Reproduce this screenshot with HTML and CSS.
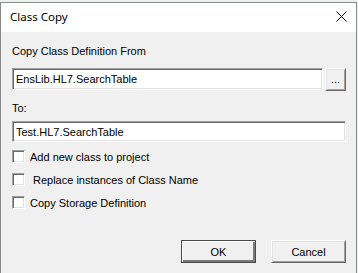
FILE: index.html
```html
<!DOCTYPE html>
<html lang="en">
<head>
  <meta charset="UTF-8" />
  <title>Class Copy</title>
  <link rel="stylesheet" href="styles.css">
</head>
<body>

  <div class="window">
    <div class="titlebar">
      <span class="title">Class Copy</span>
      <svg class="close" width="11" height="11" viewBox="0 0 11 11">
        <path d="M0.5 0.5 L10.5 10.5 M10.5 0.5 L0.5 10.5" stroke="#000" stroke-width="1" fill="none" />
      </svg>
    </div>

    <div class="content">
      <div class="label first">Copy Class Definition From</div>
      <div class="row">
        <div class="field from">EnsLib.HL7.SearchTable</div>
        <div class="btn browse">...</div>
      </div>

      <div class="label to">To:</div>
      <div class="field dest">Test.HL7.SearchTable</div>

      <div class="checks">
        <label class="check"><span class="box"></span><span class="text">Add new class to project</span></label>
        <label class="check"><span class="box"></span><span class="text wide">Replace instances of Class Name</span></label>
        <label class="check"><span class="box"></span><span class="text">Copy Storage Definition</span></label>
      </div>

      <div class="actions">
        <div class="btn default">OK</div>
        <div class="btn">Cancel</div>
      </div>
    </div>
  </div>

</body>
</html>
```

FILE: styles.css
```css
body {
  margin: 0;
  background: #eef2ee;
  font-family: "Liberation Sans", Arial, sans-serif;
  font-size: 11px;
  color: #000;
  overflow: hidden;
}

.window {
  margin-top: 2px;
  width: 355px;
  height: 280px;
  border: 1px solid #8a8a8a;
  border-bottom: none;
  background: #f0f0f0;
}

.titlebar {
  height: 29px;
  background: #fff;
  display: flex;
  align-items: center;
  justify-content: space-between;
  padding: 0 9px 0 9px;
}

.title {
  font-family: "Noto Sans", sans-serif;
  font-size: 11.5px;
  margin-top: -2px;
}

.close {
  margin-top: -2px;
}

.content {
  padding: 13px 10px 0 11px;
  display: flex;
  flex-direction: column;
}

.label {
  height: 13px;
  line-height: 13px;
}

.label.to {
  margin-top: 11px;
}

.row {
  display: flex;
  gap: 2px;
  margin-top: 10px;
}

.field {
  box-sizing: border-box;
  background: #fff;
  border-top: 1px solid #a0a0a0;
  border-left: 1px solid #a0a0a0;
  border-right: 1px solid #fff;
  border-bottom: 1px solid #fff;
  box-shadow: inset 1px 1px 0 #696969, inset -1px -1px 0 #e3e3e3;
  padding: 0 3px;
  display: flex;
  align-items: center;
}

.field.from {
  width: 311px;
  height: 22px;
}

.field.dest {
  width: 334px;
  height: 21px;
  margin-top: 6px;
}

.btn {
  box-sizing: border-box;
  display: flex;
  align-items: center;
  justify-content: center;
  background: #f0f0f0;
  border-top: 1px solid #fff;
  border-left: 1px solid #fff;
  border-right: 1px solid #696969;
  border-bottom: 1px solid #696969;
  box-shadow: inset 1px 1px 0 #e3e3e3, inset -1px -1px 0 #a0a0a0;
  width: 75px;
  height: 23px;
}

.btn.browse {
  width: 21px;
  height: 23px;
  padding-bottom: 2px;
}

.btn.default {
  border: 1px solid #4a4a4a;
  box-shadow: inset 1px 1px 0 #fff, inset -2px -2px 0 #7a7a7a;
}

.checks {
  margin-top: 8px;
  display: flex;
  flex-direction: column;
  gap: 10px;
}

.check {
  display: flex;
  align-items: center;
  height: 13px;
}

.box {
  box-sizing: border-box;
  width: 13px;
  height: 13px;
  background: #fff;
  border-top: 1px solid #a0a0a0;
  border-left: 1px solid #a0a0a0;
  border-right: 1px solid #fff;
  border-bottom: 1px solid #fff;
  box-shadow: inset 1px 1px 0 #696969, inset -1px -1px 0 #e3e3e3;
}

.text {
  margin-left: 5px;
}

.text.wide {
  margin-left: 8px;
}

.actions {
  margin-top: 31px;
  display: flex;
  justify-content: flex-end;
  gap: 15px;
}
```
